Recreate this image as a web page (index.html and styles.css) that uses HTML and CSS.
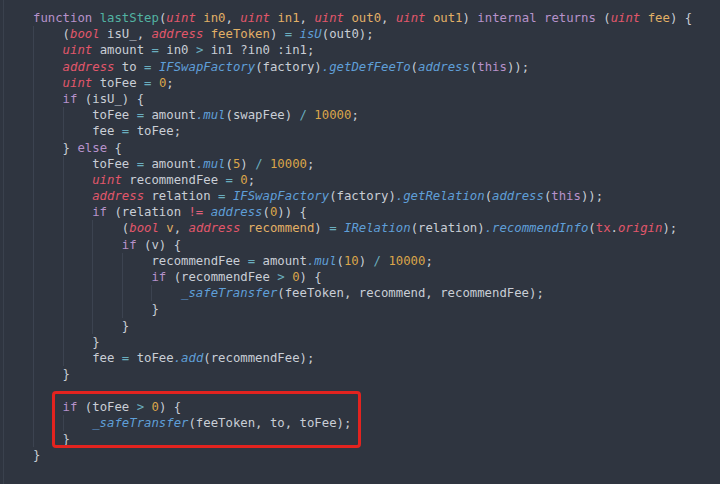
FILE: index.html
```html
<!DOCTYPE html>
<html>
<head>
<meta charset="utf-8">
<link rel="stylesheet" href="styles.css">
</head>
<body>
<div class="editor">
  <div class="gutter"></div>
  <div class="code">
    <div class="ln"><span class="kw">function</span> <span class="fn">lastStep</span>(<span class="ty">uint</span> <span class="pa">in0</span>, <span class="ty">uint</span> <span class="pa">in1</span>, <span class="ty">uint</span> <span class="pa">out0</span>, <span class="ty">uint</span> <span class="pa">out1</span>) <span class="kw">internal</span> <span class="kw">returns</span> (<span class="ty">uint</span> <span class="pa">fee</span>) {</div>
    <div class="ln"><span class="i"></span>(<span class="ty">bool</span> isU_, <span class="ty">address</span> <span class="pa">feeToken</span>) <span class="op">=</span> <span class="ca">isU</span>(out0);</div>
    <div class="ln"><span class="i"></span><span class="ty">uint</span> amount <span class="op">=</span> in0 <span class="op">&gt;</span> in1 ?in0 :in1;</div>
    <div class="ln"><span class="i"></span><span class="ty">address</span> to <span class="op">=</span> <span class="ca">IFSwapFactory</span>(factory)<span class="ca">.getDefFeeTo</span>(<span class="ca">address</span>(<span class="kw">this</span>));</div>
    <div class="ln"><span class="i"></span><span class="ty">uint</span> toFee <span class="op">=</span> <span class="nu">0</span>;</div>
    <div class="ln"><span class="i"></span><span class="kw">if</span> (isU_) {</div>
    <div class="ln"><span class="i"></span><span class="i"></span>toFee <span class="op">=</span> amount<span class="ca">.mul</span>(swapFee) <span class="op">/</span> <span class="nu">10000</span>;</div>
    <div class="ln"><span class="i"></span><span class="i"></span>fee <span class="op">=</span> toFee;</div>
    <div class="ln"><span class="i"></span>} <span class="kw">else</span> {</div>
    <div class="ln"><span class="i"></span><span class="i"></span>toFee <span class="op">=</span> amount<span class="ca">.mul</span>(<span class="nu">5</span>) <span class="op">/</span> <span class="nu">10000</span>;</div>
    <div class="ln"><span class="i"></span><span class="i"></span><span class="ty">uint</span> recommendFee <span class="op">=</span> <span class="nu">0</span>;</div>
    <div class="ln"><span class="i"></span><span class="i"></span><span class="ty">address</span> relation <span class="op">=</span> <span class="ca">IFSwapFactory</span>(factory)<span class="ca">.getRelation</span>(<span class="ca">address</span>(<span class="kw">this</span>));</div>
    <div class="ln"><span class="i"></span><span class="i"></span><span class="kw">if</span> (relation <span class="ne">!=</span> <span class="ca">address</span>(<span class="nu">0</span>)) {</div>
    <div class="ln"><span class="i"></span><span class="i"></span><span class="i"></span>(<span class="ty">bool</span> <span class="pa">v</span>, <span class="ty">address</span> <span class="pa">recommend</span>) <span class="op">=</span> <span class="ca">IRelation</span>(relation)<span class="ca">.recommendInfo</span>(<span class="tx">tx</span>.<span class="tx it">origin</span>);</div>
    <div class="ln"><span class="i"></span><span class="i"></span><span class="i"></span><span class="kw">if</span> (v) {</div>
    <div class="ln"><span class="i"></span><span class="i"></span><span class="i"></span><span class="i"></span>recommendFee <span class="op">=</span> amount<span class="ca">.mul</span>(<span class="nu">10</span>) <span class="op">/</span> <span class="nu">10000</span>;</div>
    <div class="ln"><span class="i"></span><span class="i"></span><span class="i"></span><span class="i"></span><span class="kw">if</span> (recommendFee <span class="op">&gt;</span> <span class="nu">0</span>) {</div>
    <div class="ln"><span class="i"></span><span class="i"></span><span class="i"></span><span class="i"></span><span class="i"></span><span class="ca">_safeTransfer</span>(feeToken, recommend, recommendFee);</div>
    <div class="ln"><span class="i"></span><span class="i"></span><span class="i"></span><span class="i"></span>}</div>
    <div class="ln"><span class="i"></span><span class="i"></span><span class="i"></span>}</div>
    <div class="ln"><span class="i"></span><span class="i"></span>}</div>
    <div class="ln"><span class="i"></span><span class="i"></span>fee <span class="op">=</span> toFee<span class="ca">.add</span>(recommendFee);</div>
    <div class="ln"><span class="i"></span>}</div>
    <div class="ln"><span class="i"></span></div>
    <div class="hl">
      <div class="ln"><span class="i"></span><span class="kw">if</span> (toFee <span class="op">&gt;</span> <span class="nu">0</span>) {</div>
      <div class="ln"><span class="i"></span><span class="i"></span><span class="ca">_safeTransfer</span>(feeToken, to, toFee);</div>
      <div class="ln"><span class="i"></span>}</div>
    </div>
    <div class="ln">}</div>
  </div>
</div>
</body>
</html>
```

FILE: styles.css
```css
html, body {
  margin: 0;
  padding: 0;
  background: #2f3540;
  height: 100%;
  overflow: hidden;
}

.editor {
  display: flex;
  height: 484px;
  padding-left: 3px;
  background: #2f3540;
}

.gutter {
  width: 1px;
  background: #3a414d;
  flex: none;
}

.code {
  padding: 10px 0 0 29px;
  font-family: "DejaVu Sans Mono", "Liberation Mono", monospace;
  font-size: 12.3px;
  line-height: 16.2px;
  color: #c9ced6;
}

.ln {
  height: 16.2px;
  white-space: pre;
}

.i {
  display: inline-block;
  width: 4ch;
  height: 16.2px;
  vertical-align: top;
  box-sizing: border-box;
  border-left: 1px solid #3c4350;
}

.kw { color: #b792cb; }
.fn { color: #52b3a2; }
.ty { color: #e2576b; font-style: italic; }
.pa { color: #e2b066; }
.nu { color: #dba54a; }
.op { color: #6aaebf; }
.ne { color: #e0607a; }
.ca { color: #5f9fd8; font-style: italic; }
.tx { color: #e2576b; }
.it { font-style: italic; }

.hl {
  position: relative;
}

.hl::after {
  content: "";
  position: absolute;
  left: 19px;
  top: -8px;
  width: 309px;
  height: 57px;
  box-sizing: border-box;
  border: 3px solid #e3231f;
  border-radius: 4px;
}
```
